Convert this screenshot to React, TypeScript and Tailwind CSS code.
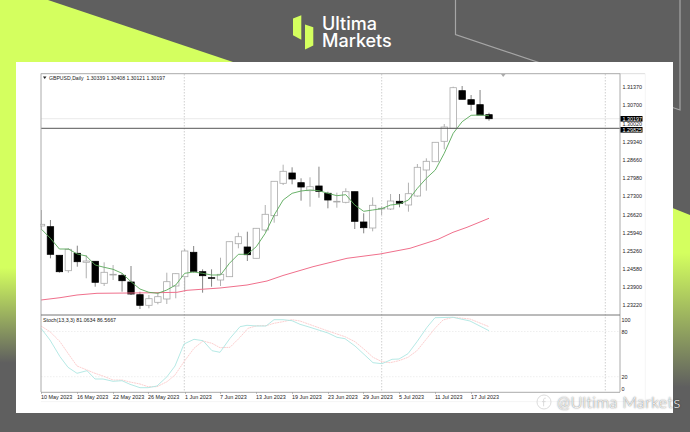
import React from 'react';

const font = { fontFamily: '"Liberation Sans", Arial, sans-serif' };

// [wick top, body top, body bottom, wick bottom, black?] in page pixels, one row per daily bar
const candles: [number, number, number, number, boolean][] = [
  [210, 224.3, 226, 230, false],
  [220, 226.7, 254.3, 258.3, true],
  [255.3, 255.3, 271.7, 272.7, true],
  [248.3, 249.3, 270.7, 272.7, false],
  [245.7, 253.3, 261.7, 266.7, true],
  [255, 261, 262.3, 278.3, false],
  [261.3, 261.3, 282.3, 286.7, true],
  [262.3, 272.3, 283.3, 286, false],
  [265, 274.3, 275, 280, false],
  [273.3, 275.3, 280.7, 291.7, true],
  [266, 282, 294, 295, true],
  [291.7, 294.7, 305.3, 309, true],
  [295, 298.7, 305.3, 308.3, false],
  [292.7, 296.7, 302.3, 304.3, false],
  [272.7, 281.7, 299, 304, false],
  [273.3, 273.7, 286, 298.3, false],
  [249, 251, 276.7, 291.7, false],
  [246, 252.3, 271.3, 272.7, true],
  [269.3, 271.7, 275.7, 292.7, true],
  [269.3, 277.7, 278.3, 286.7, true],
  [257.7, 274.3, 280, 286, false],
  [241.7, 241.7, 276.7, 276.7, false],
  [232.7, 236.7, 243.7, 248.3, false],
  [231.7, 247, 254.7, 261, true],
  [228.3, 228.3, 258.3, 258.3, false],
  [205, 214.3, 230, 231.7, false],
  [181.3, 181.3, 215.7, 222.7, false],
  [164.7, 171.3, 183.3, 185, false],
  [167.3, 173, 179, 184.3, true],
  [178.3, 182.7, 187, 200.7, true],
  [177.3, 186.7, 190.7, 206.7, false],
  [166.7, 186, 191.3, 197.7, true],
  [191.7, 193.3, 200, 208.3, true],
  [192.7, 201.3, 202, 207.7, false],
  [188.3, 191.7, 202.3, 203.3, false],
  [191.7, 191.7, 221.3, 229, true],
  [213.3, 222, 227.7, 233.3, true],
  [197.3, 205.3, 228, 231.3, false],
  [206.7, 208.3, 209, 215, false],
  [194, 201, 209, 210, false],
  [194, 201.3, 203.3, 207.3, true],
  [182.7, 193.7, 205, 211.7, false],
  [164, 167.3, 196, 196.7, false],
  [158.3, 161.3, 170, 190.7, false],
  [142.3, 142.3, 161.7, 161.7, false],
  [124, 127, 141.3, 149.3, false],
  [86.7, 87.7, 128.3, 128.3, false],
  [86, 90.7, 99.3, 99.3, true],
  [95, 99.7, 104.3, 110.7, true],
  [90, 104.7, 115, 115, true],
  [112.7, 114.7, 118.7, 120.7, true],
];

const barX = (i: number) => 41.5 + 8.95 * i;

const fastMa = [
  229.3, 238.3, 249, 249, 254, 256, 265, 267.3, 269.3, 273.3, 281.7, 289, 292.3, 293.3, 290, 285, 273.3,
  272, 273.3, 275, 275, 263.3, 254.3, 254.3, 246.7, 233.3, 215, 200, 193.3, 191, 190, 190.7, 193.3, 195.7,
  194.7, 205, 211.3, 210, 208.7, 205, 204, 200, 188.3, 178.3, 170, 153.3, 133.3, 121.7, 115.3, 115, 115.7,
];

const slowMa =
  '41,300 60,297.7 77,295 97,293.3 130,293 157,292.7 177,292.3 187,290.3 220,288 247,285 267,281 283,275.5 313,266.7 347,258.3 380,254 410,248.3 438,239.3 453,232.3 467,227.3 489,218.3';

const stochMain =
  '41,328.3 50,340 60,356.7 68,367.3 77,373.3 87,370.7 95,379 103,379 113,381.3 122,380.7 130,384.3 140,387.7 148,387.7 157,386 167,376.7 175,366 184,344 194,339.3 203,340.7 212,350.7 220,352.3 230,338.3 240,326.7 247,325.3 257,326 266,326 274,319.7 283,319.7 292,320.7 300,324.3 310,327.3 328,333 337,337.3 345,338.7 355,346 373,362.7 382,363.7 392,359.3 399,359 408,353.7 417,341.7 427,327.3 435,317.7 453,317.3 470,321 489,330.7';

const stochSignal =
  '41,326 50,331.7 60,341.7 68,353.3 77,366 87,370 95,373.3 103,376 113,380 122,380 130,382 140,384 148,386.7 157,386.7 167,381.7 175,375 184,361.7 194,348.3 203,341 212,343.3 220,347.7 230,347.3 240,337.3 248,328.3 257,325.7 266,325.7 274,323.3 283,321.7 292,319.7 300,321 328,331 345,336.7 355,341.7 365,350 373,357.3 382,361.7 390,362.7 399,360.7 408,357.3 417,350.7 427,338.3 435,328.3 443,320 453,317.3 470,319 489,326.7';

const priceLabels: [string, number][] = [
  ['1.31370', 87.3],
  ['1.30700', 105.3],
  ['1.30020', 123.8],
  ['1.29340', 141.7],
  ['1.28660', 160],
  ['1.27980', 178],
  ['1.27300', 196],
  ['1.26620', 214.5],
  ['1.25940', 232.7],
  ['1.25260', 251],
  ['1.24580', 269],
  ['1.23900', 287],
  ['1.23220', 305],
];

const dateLabels: [string, number][] = [
  ['10 May 2023', 41],
  ['16 May 2023', 77],
  ['22 May 2023', 113],
  ['26 May 2023', 148],
  ['1 Jun 2023', 185],
  ['7 Jun 2023', 220],
  ['13 Jun 2023', 256],
  ['19 Jun 2023', 292],
  ['23 Jun 2023', 328],
  ['29 Jun 2023', 363],
  ['5 Jul 2023', 399],
  ['11 Jul 2023', 435],
  ['17 Jul 2023', 471],
];

const Chart: React.FC = () => (
  // viewBox keeps page coordinates, so values read off the screenshot go straight in
  <svg width="606" height="331" viewBox="40 73 606 331" style={font} className="block">
    <g stroke="#c4c4c4" strokeWidth="0.8" strokeDasharray="1.5 1.5">
      <line x1="184.3" y1="74" x2="184.3" y2="392" />
      <line x1="381.7" y1="74" x2="381.7" y2="392" />
      <line x1="605.3" y1="74" x2="605.3" y2="392" />
    </g>
    <g stroke="#e8e8e8" strokeWidth="0.7" strokeDasharray="1.5 1.5">
      <line x1="41" y1="331.5" x2="620" y2="331.5" />
      <line x1="41" y1="376.7" x2="620" y2="376.7" />
    </g>
    <line x1="41" y1="118.7" x2="620" y2="118.7" stroke="#e4e4e4" strokeWidth="0.8" />

    {candles.map(([wickTop, bodyTop, bodyBottom, wickBottom, black], i) => {
      const x = barX(i);
      return (
        <g key={i}>
          <line x1={x} y1={wickTop} x2={x} y2={wickBottom} stroke={black ? '#777' : '#a8a8a8'} strokeWidth="0.9" />
          <rect
            x={x - 3.2}
            y={bodyTop}
            width="6.4"
            height={Math.max(bodyBottom - bodyTop, 0.6)}
            fill={black ? '#000' : '#fff'}
            stroke={black ? '#000' : '#aaa'}
            strokeWidth="0.8"
          />
        </g>
      );
    })}

    <polyline points={slowMa} fill="none" stroke="#f0708c" strokeWidth="1" />
    <polyline
      points={fastMa.map((y, i) => `${barX(i)},${y}`).join(' ')}
      fill="none"
      stroke="#58a858"
      strokeWidth="0.9"
    />
    <line x1="41" y1="128.3" x2="620" y2="128.3" stroke="#555" strokeWidth="1" />

    <polyline points={stochSignal} fill="none" stroke="#fbc4c4" strokeWidth="0.8" strokeDasharray="2 0.6" />
    <polyline points={stochMain} fill="none" stroke="#aee6e2" strokeWidth="0.9" />

    {/* frames */}
    <line x1="41" y1="73.7" x2="620" y2="73.7" stroke="#aaa" strokeWidth="1" />
    <line x1="620" y1="73.7" x2="645" y2="73.7" stroke="#ddd" strokeWidth="1" />
    <line x1="41" y1="73.5" x2="41" y2="392" stroke="#aaa" strokeWidth="1" />
    <line x1="620" y1="73.5" x2="620" y2="392" stroke="#aaa" strokeWidth="1" />
    <line x1="41" y1="315" x2="620" y2="315" stroke="#777" strokeWidth="1" />
    <line x1="41" y1="392.3" x2="620" y2="392.3" stroke="#aaa" strokeWidth="1" />
    <line x1="645.3" y1="73.5" x2="645.3" y2="402" stroke="#f0f0f0" strokeWidth="0.7" />
    <line x1="41" y1="401.6" x2="645" y2="401.6" stroke="#f0f0f0" strokeWidth="0.7" />
    <polygon points="501,74 505.5,74 503.2,77" fill="#aaa" />

    {/* legends */}
    <polygon points="43,76.5 46.5,76.5 44.7,79" fill="#222" />
    <text x="49" y="80" fontSize="5.15" fill="#222">
      GBPUSD,Daily&#160;&#160;1.30339 1.30408 1.30121 1.30197
    </text>
    <text x="43" y="322" fontSize="5.3" fill="#222">
      Stoch(13,3,3) 81.0634 86.5667
    </text>

    {/* price scale */}
    {priceLabels.map(([label, y]) => (
      <text key={label} x="622.5" y={y + 2} fontSize="5.4" fill="#222">
        {label}
      </text>
    ))}
    <rect x="620.5" y="116" width="22" height="5.6" fill="#000" />
    <text x="622.5" y="120.8" fontSize="5.4" fill="#fff">
      1.30197
    </text>
    <rect x="620.5" y="127" width="22" height="5.6" fill="#000" />
    <text x="622.5" y="131.8" fontSize="5.4" fill="#fff">
      1.29825
    </text>

    {/* stochastic scale */}
    {(
      [
        ['100', 319.5],
        ['80', 331.5],
        ['20', 377],
        ['0', 389],
      ] as [string, number][]
    ).map(([label, y]) => (
      <text key={label} x="621.5" y={y + 2} fontSize="5.4" fill="#222">
        {label}
      </text>
    ))}

    {/* time scale */}
    {dateLabels.map(([label, x]) => (
      <g key={label}>
        <line x1={x + 0.5} y1="392" x2={x + 0.5} y2="394" stroke="#999" strokeWidth="0.6" />
        <text x={x} y="398.5" fontSize="5.4" fill="#222">
          {label}
        </text>
      </g>
    ))}
  </svg>
);

const Backdrop: React.FC = () => (
  <svg width="690" height="432" viewBox="0 0 690 432" className="absolute inset-0">
    <defs>
      <linearGradient id="limeLeft" x1="0" y1="0" x2="0" y2="432" gradientUnits="userSpaceOnUse">
        <stop offset="0.62" stopColor="#d4ff5f" />
        <stop offset="0.84" stopColor="#5f5f5f" />
      </linearGradient>
      <linearGradient id="limeRight" x1="0" y1="208" x2="0" y2="432" gradientUnits="userSpaceOnUse">
        <stop offset="0.2" stopColor="#d4ff5f" />
        <stop offset="0.8" stopColor="#5f5f5f" />
      </linearGradient>
    </defs>
    <polygon points="0,0 48,0 233,62 233,70 16,432 0,432" fill="url(#limeLeft)" />
    <polygon points="660,203 690,215 690,432 660,432" fill="url(#limeRight)" />
    <polyline points="455.5,0 455.5,34.5 680,110 680,0" fill="none" stroke="#a6a6a6" strokeWidth="1.2" />
  </svg>
);

const Logo: React.FC = () => (
  <div className="flex items-start gap-[8px] pl-[293px]">
    <svg width="21" height="35" viewBox="293 14.5 21 35" className="mt-[14.5px]">
      <polygon points="293,18 301.3,14.7 301.3,39.3 293,34.7" fill="#d4ff5f" />
      <polygon points="305,24 313.3,26.7 313.3,45 305,49" fill="#d4ff5f" />
    </svg>
    <div
      className="text-white text-[18px] leading-[16.5px] font-medium pt-[16px]"
      style={{ fontFamily: 'Inter, sans-serif' }}
    >
      <div>Ultima</div>
      <div>Markets</div>
    </div>
  </div>
);

const Watermark: React.FC = () => (
  <div className="absolute left-[536px] top-[392px] flex items-center gap-[5px] text-white">
    <svg width="16" height="16" viewBox="0 0 16 16" fill="none" stroke="#d8d8d8" strokeWidth="0.9">
      <circle cx="8" cy="8" r="7" />
      <path d="M9.8 4.2c-1.3-.3-2.2.3-2.2 1.7v6.4M6 7.6h3.6" />
    </svg>
    <span
      className="text-[16px] leading-[20px] font-light tracking-[0.4px] [text-shadow:0_0_1.5px_#222]"
      style={{ fontFamily: 'Lato, sans-serif' }}
    >
      @Ultima Markets
    </span>
  </div>
);

export default function App() {
  return (
    <div className="relative w-[690px] h-[432px] overflow-hidden bg-[#5f5f5f]">
      <Backdrop />
      <div className="relative flex flex-col">
        <header className="h-[62px]">
          <Logo />
        </header>
        <main className="ml-[16px] w-[657px] h-[351px] bg-white pt-[11px] pl-[24px]">
          <Chart />
        </main>
      </div>
      <Watermark />
    </div>
  );
}
